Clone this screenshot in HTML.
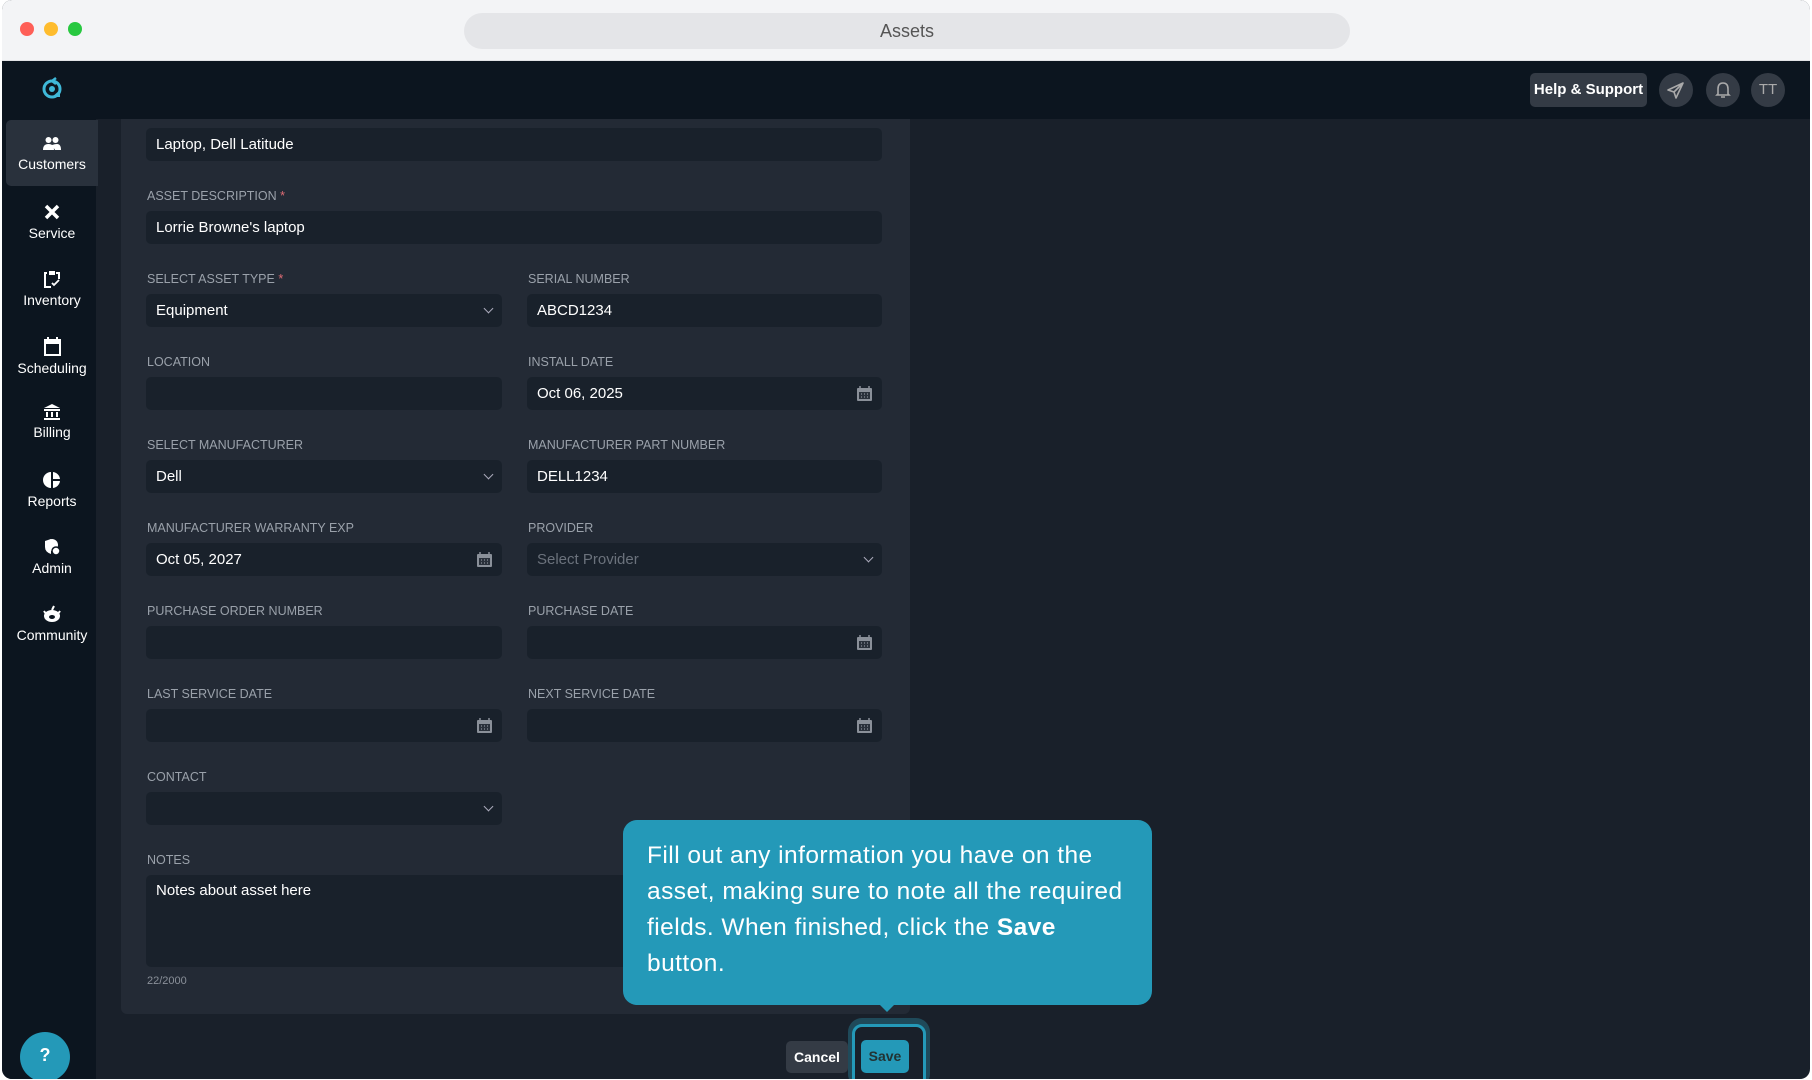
<!DOCTYPE html>
<html><head><meta charset="utf-8"><style>
*{margin:0;padding:0;box-sizing:border-box}
body{width:1812px;height:1080px;background:#fff;font-family:"Liberation Sans",sans-serif;position:relative;overflow:hidden}
.a{position:absolute}
.win{left:2px;top:0;width:1808px;height:1079px;border-radius:10px;overflow:hidden;background:#19202a}
.lbl{position:absolute;color:#9aa1aa;font-size:12.5px;letter-spacing:0}
.lbl i{color:#e06c75;font-style:normal}
.inp{position:absolute;height:33px;background:#19212b;border-radius:5px;color:#fff;font-size:15px;line-height:33px;padding-left:10px}
.chev{position:absolute;right:10px;top:11px;width:7px;height:7px;border-right:1.5px solid #aab;border-bottom:1.5px solid #aab;transform:rotate(45deg)}
.cal{position:absolute;right:10px;top:9px;width:15px;height:15px}
.nav{position:absolute;left:4px;width:92px;height:66px;color:#fff;font-size:14px;text-align:center}
.nav svg{display:block;margin:16px auto 4px}
.circ{position:absolute;width:34px;height:34px;border-radius:50%;background:#343b45;top:73px}
</style></head><body>
<div class="a win">
 <div class="a" style="left:0;top:0;width:1808px;height:61px;background:#f3f4f6;border-bottom:1px solid #e2e3e6"></div>
 <div class="a" style="left:18px;top:22px;width:14px;height:14px;border-radius:50%;background:#fe5f57"></div>
 <div class="a" style="left:42px;top:22px;width:14px;height:14px;border-radius:50%;background:#febc2e"></div>
 <div class="a" style="left:66px;top:22px;width:14px;height:14px;border-radius:50%;background:#28c840"></div>
 <div class="a" style="left:462px;top:13px;width:886px;height:36px;border-radius:18px;background:#e4e5e8;color:#555;font-size:18px;text-align:center;line-height:36px">Assets</div>
 <div class="a" style="left:0;top:61px;width:1808px;height:58px;background:#0c151f"></div>
 <svg class="a" style="left:37px;top:74px" width="26" height="28" viewBox="0 0 26 28"><circle cx="13" cy="15" r="8" fill="none" stroke="#3fb9d9" stroke-width="3"/><circle cx="13" cy="15" r="3" fill="#3fb9d9"/><path d="M13 7 L17 4 M13 7 L17 10" stroke="#3fb9d9" stroke-width="2.5" fill="none"/><path d="M13 23 L21 23 L21 16 Z" fill="#3fb9d9"/></svg>
 <div class="a" style="left:1528px;top:73px;width:117px;height:34px;border-radius:5px;background:#343b45;color:#fff;font-weight:bold;font-size:15px;line-height:34px;text-align:center">Help &amp; Support</div>
 <div class="circ" style="left:1657px"><svg width="34" height="34" viewBox="0 0 34 34"><path d="M24 10 L9 17 L15 19 L17 25 Z M15 19 L24 10" fill="none" stroke="#aaa" stroke-width="1.6" stroke-linejoin="round"/></svg></div>
 <div class="circ" style="left:1704px"><svg width="34" height="34" viewBox="0 0 34 34"><path d="M12 21 L12 16 Q12 10 17 10 Q22 10 22 16 L22 21 L23 22 L11 22 Z M15 24 L19 24" fill="none" stroke="#aaa" stroke-width="1.6"/></svg></div>
 <div class="circ" style="left:1749px;color:#aaa;font-size:15px;text-align:center;line-height:34px">TT</div>
 <div class="a" style="left:0;top:119px;width:94px;height:960px;background:#0c151f"></div>
 <div class="nav" style="top:120px;background:#29313c;border-radius:5px 0 0 5px"><svg width="20" height="16" viewBox="0 0 20 16"><circle cx="6.5" cy="4" r="3" fill="#fff"/><circle cx="13.5" cy="4" r="3" fill="#fff"/><path d="M1 14 Q1 8 6.5 8 Q12 8 12 14 Z M10 9 Q13 8 15 8 Q19 8 19 14 L13 14" fill="#fff"/></svg>Customers</div>
 <div class="nav" style="top:187px"><svg width="18" height="18" viewBox="0 0 18 18"><path d="M3 3 L15 15 M15 3 L3 15" stroke="#fff" stroke-width="3.5"/></svg>Service</div>
 <div class="nav" style="top:254px"><svg width="16" height="18" viewBox="0 0 16 18"><path d="M3 3 L1 3 L1 17 L7 17 M12 3 L15 3 L15 9" stroke="#fff" stroke-width="2" fill="none"/><rect x="5" y="1" width="6" height="4" fill="#fff"/><path d="M8 13 L10 15 L15 10" stroke="#fff" stroke-width="1.8" fill="none"/></svg>Inventory</div>
 <div class="nav" style="top:321px"><svg width="17" height="19" viewBox="0 0 17 19"><rect x="1" y="3" width="15" height="15" fill="none" stroke="#fff" stroke-width="2"/><rect x="1" y="3" width="15" height="4" fill="#fff"/><path d="M4 0 L4 3 M13 0 L13 3" stroke="#fff" stroke-width="2"/></svg>Scheduling</div>
 <div class="nav" style="top:388px"><svg width="18" height="16" viewBox="0 0 18 16"><path d="M9 0 L17 4 L1 4 Z" fill="#fff"/><rect x="1" y="5" width="16" height="2" fill="#fff"/><rect x="1" y="14" width="16" height="2" fill="#fff"/><path d="M4 8 L4 13 M9 8 L9 13 M14 8 L14 13" stroke="#fff" stroke-width="2"/></svg>Billing</div>
 <div class="nav" style="top:455px"><svg width="18" height="18" viewBox="0 0 18 18"><path d="M8 1 A8 8 0 1 0 8 17 Z M10 1 L10 8 L17 8 A8 8 0 0 0 10 1 Z M10 10 L10 17 A8 8 0 0 0 17 10 Z" fill="#fff"/></svg>Reports</div>
 <div class="nav" style="top:522px"><svg width="18" height="18" viewBox="0 0 18 18"><path d="M8 1 L2 3 L2 9 Q2 14 8 16 Z" fill="#fff"/><circle cx="9" cy="7" r="6" fill="#fff"/><circle cx="13" cy="13" r="4" fill="#fff" stroke="#0c151f" stroke-width="1.5"/></svg>Admin</div>
 <div class="nav" style="top:589px"><svg width="20" height="18" viewBox="0 0 20 18"><ellipse cx="10" cy="11" rx="8" ry="6" fill="#fff"/><path d="M2 6 L4 9 M18 6 L16 9 M10 5 L12 1" stroke="#fff" stroke-width="2"/><ellipse cx="10" cy="12" rx="3" ry="2" fill="#0c151f"/></svg>Community</div>
 <div class="a" style="left:18px;top:1032px;width:50px;height:50px;border-radius:50%;background:#2499b8;color:#fff;font-weight:bold;font-size:18px;text-align:center;line-height:46px">?</div>

 <div class="a" style="left:119px;top:119px;width:789px;height:895px;background:#232a35;border-radius:0 0 6px 6px"></div>
 <div class="a" style="left:846px;top:1018px;width:82px;height:70px;border-radius:14px;background:#1f4a5a"></div>
 <div class="a" style="left:850px;top:1024px;width:74px;height:64px;border-radius:10px;border:3px solid #2499b8;background:#19202a"></div>
</div>
<div class="inp" style="left:146px;top:128px;width:736px">Laptop, Dell Latitude</div>
<div class="lbl" style="left:147px;top:189px">ASSET DESCRIPTION <i>*</i></div>
<div class="inp" style="left:146px;top:211px;width:736px">Lorrie Browne's laptop</div>
<div class="lbl" style="left:147px;top:272px">SELECT ASSET TYPE <i>*</i></div>
<div class="inp" style="left:146px;top:294px;width:356px">Equipment<span class="chev"></span></div>
<div class="lbl" style="left:528px;top:272px">SERIAL NUMBER</div>
<div class="inp" style="left:527px;top:294px;width:355px">ABCD1234</div>
<div class="lbl" style="left:147px;top:355px">LOCATION</div>
<div class="inp" style="left:146px;top:377px;width:356px"></div>
<div class="lbl" style="left:528px;top:355px">INSTALL DATE</div>
<div class="inp" style="left:527px;top:377px;width:355px">Oct 06, 2025<svg class="cal" viewBox="0 0 15 15"><rect x="0" y="2" width="15" height="13" rx="1" fill="#8a9099"/><rect x="2" y="6" width="11" height="7" fill="#2a313b"/><path d="M3 0 L3 3 M12 0 L12 3" stroke="#8a9099" stroke-width="1.5"/><path d="M4 8h1M7 8h1M10 8h1M4 11h1M7 11h1M10 11h1" stroke="#8a9099" stroke-width="1.2"/></svg></div>
<div class="lbl" style="left:147px;top:438px">SELECT MANUFACTURER</div>
<div class="inp" style="left:146px;top:460px;width:356px">Dell<span class="chev"></span></div>
<div class="lbl" style="left:528px;top:438px">MANUFACTURER PART NUMBER</div>
<div class="inp" style="left:527px;top:460px;width:355px">DELL1234</div>
<div class="lbl" style="left:147px;top:521px">MANUFACTURER WARRANTY EXP</div>
<div class="inp" style="left:146px;top:543px;width:356px">Oct 05, 2027<svg class="cal" viewBox="0 0 15 15"><rect x="0" y="2" width="15" height="13" rx="1" fill="#8a9099"/><rect x="2" y="6" width="11" height="7" fill="#2a313b"/><path d="M3 0 L3 3 M12 0 L12 3" stroke="#8a9099" stroke-width="1.5"/><path d="M4 8h1M7 8h1M10 8h1M4 11h1M7 11h1M10 11h1" stroke="#8a9099" stroke-width="1.2"/></svg></div>
<div class="lbl" style="left:528px;top:521px">PROVIDER</div>
<div class="inp" style="left:527px;top:543px;width:355px;color:#6b727c">Select Provider<span class="chev"></span></div>
<div class="lbl" style="left:147px;top:604px">PURCHASE ORDER NUMBER</div>
<div class="inp" style="left:146px;top:626px;width:356px"></div>
<div class="lbl" style="left:528px;top:604px">PURCHASE DATE</div>
<div class="inp" style="left:527px;top:626px;width:355px"><svg class="cal" viewBox="0 0 15 15"><rect x="0" y="2" width="15" height="13" rx="1" fill="#8a9099"/><rect x="2" y="6" width="11" height="7" fill="#2a313b"/><path d="M3 0 L3 3 M12 0 L12 3" stroke="#8a9099" stroke-width="1.5"/><path d="M4 8h1M7 8h1M10 8h1M4 11h1M7 11h1M10 11h1" stroke="#8a9099" stroke-width="1.2"/></svg></div>
<div class="lbl" style="left:147px;top:687px">LAST SERVICE DATE</div>
<div class="inp" style="left:146px;top:709px;width:356px"><svg class="cal" viewBox="0 0 15 15"><rect x="0" y="2" width="15" height="13" rx="1" fill="#8a9099"/><rect x="2" y="6" width="11" height="7" fill="#2a313b"/><path d="M3 0 L3 3 M12 0 L12 3" stroke="#8a9099" stroke-width="1.5"/><path d="M4 8h1M7 8h1M10 8h1M4 11h1M7 11h1M10 11h1" stroke="#8a9099" stroke-width="1.2"/></svg></div>
<div class="lbl" style="left:528px;top:687px">NEXT SERVICE DATE</div>
<div class="inp" style="left:527px;top:709px;width:355px"><svg class="cal" viewBox="0 0 15 15"><rect x="0" y="2" width="15" height="13" rx="1" fill="#8a9099"/><rect x="2" y="6" width="11" height="7" fill="#2a313b"/><path d="M3 0 L3 3 M12 0 L12 3" stroke="#8a9099" stroke-width="1.5"/><path d="M4 8h1M7 8h1M10 8h1M4 11h1M7 11h1M10 11h1" stroke="#8a9099" stroke-width="1.2"/></svg></div>
<div class="lbl" style="left:147px;top:770px">CONTACT</div>
<div class="inp" style="left:146px;top:792px;width:356px"><span class="chev"></span></div>
<div class="lbl" style="left:147px;top:853px">NOTES</div>
<div class="inp" style="left:146px;top:875px;width:736px;height:92px;line-height:32px">Notes about asset here</div>
<div class="a" style="left:147px;top:975px;color:#8a9099;font-size:11px">22/2000</div>

<div class="a" style="left:786px;top:1041px;width:62px;height:32px;border-radius:5px;background:#343b45;color:#fff;font-weight:bold;font-size:14px;text-align:center;line-height:32px">Cancel</div>
<div class="a" style="left:861px;top:1040px;width:48px;height:33px;border-radius:5px;background:#2499b8;color:#233;font-weight:bold;font-size:14px;text-align:center;line-height:33px">Save</div>

<div class="a" style="left:623px;top:820px;width:529px;height:185px;border-radius:14px;background:#2499b8;color:#fff;font-size:24.5px;line-height:36px;padding:18px 20px 0 24px;letter-spacing:0.45px">Fill out any information you have on the asset, making sure to note all the required fields. When finished, click the <b>Save</b> button.</div>
<div class="a" style="left:879px;top:1004px;width:0;height:0;border-left:8px solid transparent;border-right:8px solid transparent;border-top:8px solid #2499b8"></div>
</body></html>
